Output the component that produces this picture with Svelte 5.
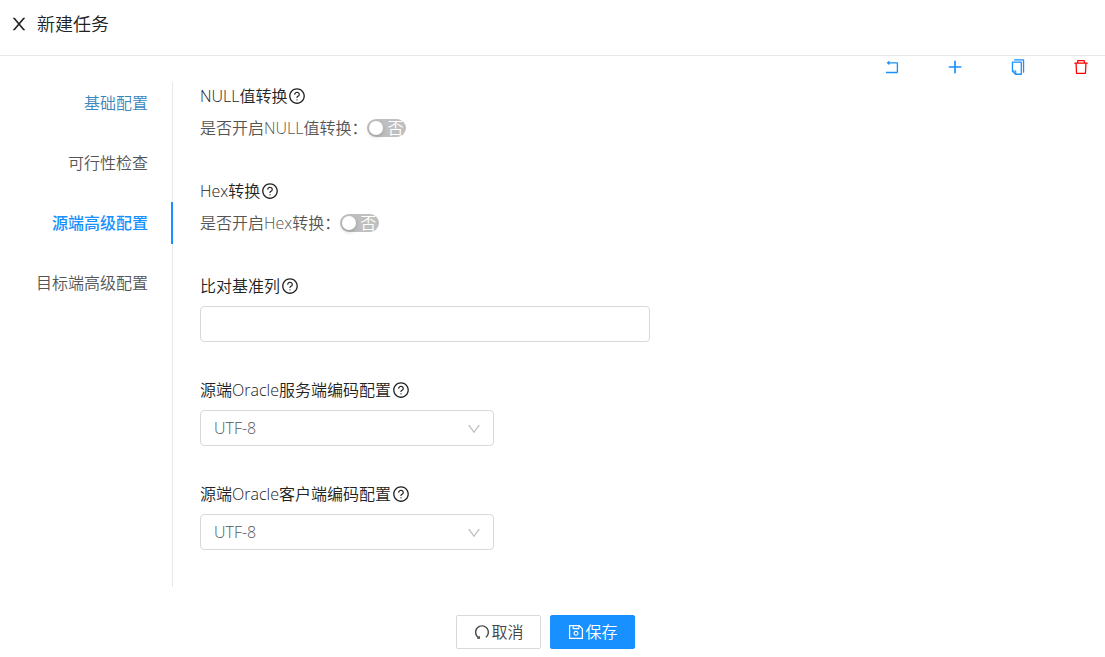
<script lang="ts">
	const icons = {
		close: 'M563.8 512l262.5-312.9c4.4-5.2.7-13.1-6.1-13.1h-79.8c-4.7 0-9.2 2.1-12.3 5.7L511.6 449.8 295.1 191.7c-3-3.6-7.5-5.7-12.3-5.7H203c-6.8 0-10.5 7.9-6.1 13.1L459.4 512 196.9 824.9A7.95 7.95 0 0 0 203 838h79.8c4.7 0 9.2-2.1 12.3-5.7l216.5-258.1 216.5 258.1c3 3.6 7.5 5.7 12.3 5.7h79.8c6.8 0 10.5-7.9 6.1-13.1L563.8 512z',
		rollback: 'M793 242H366v-74c0-6.7-7.7-10.4-12.9-6.3l-142 112a8 8 0 0 0 0 12.6l142 112c5.2 4.1 12.9.4 12.9-6.3v-74h415v470H175c-4.4 0-8 3.6-8 8v60c0 4.4 3.6 8 8 8h618c35.3 0 64-28.7 64-64V306c0-35.3-28.7-64-64-64z',
		plus: 'M464 152h96v312h312v96H560v312h-96V560H152v-96h312z',
		copy: 'M832 64H296c-4.4 0-8 3.6-8 8v56c0 4.4 3.6 8 8 8h496v688c0 4.4 3.6 8 8 8h56c4.4 0 8-3.6 8-8V96c0-17.7-14.3-32-32-32zM704 192H192c-17.7 0-32 14.3-32 32v530.7c0 8.5 3.4 16.6 9.4 22.6l173.3 173.3c2.2 2.2 4.7 4 7.4 5.5v1.9h4.2c3.5 1.3 7.2 2 11 2H704c17.7 0 32-14.3 32-32V224c0-17.7-14.3-32-32-32zM350 856.2L263.9 770H350v86.2zM664 888H414V746c0-22.1-17.9-40-40-40H232V264h432v624z',
		trash: 'M360 184h-8c4.4 0 8-3.6 8-8v8h304v-8c0 4.4 3.6 8 8 8h-8v72h72v-80c0-35.3-28.7-64-64-64H352c-35.3 0-64 28.7-64 64v80h72v-72zm504 72H160c-17.7 0-32 14.3-32 32v32c0 4.4 3.6 8 8 8h60.4l24.7 523c1.6 34.1 29.8 61 63.9 61h454c34.2 0 62.3-26.8 63.9-61l24.7-523H888c4.4 0 8-3.6 8-8v-32c0-17.7-14.3-32-32-32zM731.3 840H292.7l-24.2-512h487l-24.2 512z',
		help: 'M512 64C264.6 64 64 264.6 64 512s200.6 448 448 448 448-200.6 448-448S759.4 64 512 64zm0 820c-205.4 0-372-166.6-372-372s166.6-372 372-372 372 166.6 372 372-166.6 372-372 372zM623.6 316.7C593.6 290.4 554 276 512 276s-81.6 14.5-111.6 40.7C369.2 344 352 380.7 352 420v7.6c0 4.4 3.6 8 8 8h48c4.4 0 8-3.6 8-8V420c0-44.1 43.1-80 96-80s96 35.9 96 80c0 31.1-22 59.6-56.1 72.7-21.2 8.1-39.2 22.3-52.1 40.9-13.1 19-19.9 41.8-19.9 64.9V620c0 4.4 3.6 8 8 8h48c4.4 0 8-3.6 8-8v-22.7a48.3 48.3 0 0 1 30.9-44.8c59-22.7 97.1-74.7 97.1-132.5.1-39.3-17.1-76-48.3-103.3zM472 732a40 40 0 1 0 80 0 40 40 0 1 0-80 0z',
		down: 'M884 256h-75c-5.1 0-9.9 2.5-12.9 6.6L512 654.2 227.9 262.6c-3-4.1-7.8-6.6-12.9-6.6h-75c-6.5 0-10.3 7.4-6.5 12.7l352.6 486.1c12.8 17.6 39 17.6 51.7 0l352.6-486.1c3.9-5.3.1-12.7-6.4-12.7z',
		undo: 'M511.4 124C290.5 124.3 112 303 112 523.9c0 128 60.2 242 153.8 315.2l-37.5 48c-4.1 5.3-.3 13 6.3 12.9l167-.8c5.2 0 9-4.9 7.7-9.9L369.8 727a8 8 0 0 0-14.1-3L315 776.1c-10.2-8-20-16.7-29.3-26a318.64 318.64 0 0 1-68.6-101.7C200.4 609 192 567.1 192 523.9s8.4-85.1 25.1-124.5c16.1-38.1 39.2-72.3 68.6-101.7 29.4-29.4 63.6-52.5 101.7-68.6C426.9 212.4 468.8 204 512 204s85.1 8.4 124.5 25.1c38.1 16.1 72.3 39.2 101.7 68.6 29.4 29.4 52.5 63.6 68.6 101.7 16.7 39.4 25.1 81.3 25.1 124.5s-8.4 85.1-25.1 124.5a318.64 318.64 0 0 1-68.6 101.7c-7.5 7.5-15.3 14.5-23.4 21.2a7.93 7.93 0 0 0-1.2 11.1l39.4 50.5c2.8 3.5 7.9 4.1 11.4 1.3C854.5 760.8 912 649.1 912 523.9c0-221.1-179.4-400.2-400.6-399.9z',
		save: 'M893.3 293.3L730.7 130.7c-7.5-7.5-16.7-13-26.7-16V112H144c-17.7 0-32 14.3-32 32v736c0 17.7 14.3 32 32 32h736c17.7 0 32-14.3 32-32V338.5c0-17-6.7-33.2-18.7-45.2zM384 184h256v104H384V184zm456 656H184V184h136v136c0 17.7 14.3 32 32 32h320c17.7 0 32-14.3 32-32V205.8l136 136V840zM512 442c-79.5 0-144 64.5-144 144s64.5 144 144 144 144-64.5 144-144-64.5-144-144-144zm0 224c-44.2 0-80-35.8-80-80s35.8-80 80-80 80 35.8 80 80-35.8 80-80 80z'
	};

	const steps = ['基础配置', '可行性检查', '源端高级配置', '目标端高级配置'];
	let current = $state(2);

	let switches = $state([
		{ id: 'null-convert', title: 'NULL值转换', text: '是否开启NULL值转换', on: false },
		{ id: 'hex-convert', title: 'Hex转换', text: '是否开启Hex转换', on: false }
	]);
	let baseColumn = $state('');
	let encodings = $state([
		{ id: 'server-encoding', title: '源端Oracle服务端编码配置', value: 'UTF-8' },
		{ id: 'client-encoding', title: '源端Oracle客户端编码配置', value: 'UTF-8' }
	]);
</script>

{#snippet icon(path: string)}
	<svg class="icon" viewBox="0 0 1024 1024" aria-hidden="true"><path d={path} /></svg>
{/snippet}

<div class="page">
	<header>
		<button class="icon-btn close">{@render icon(icons.close)}</button>
		<h1>新建任务</h1>
	</header>

	<div class="toolbar">
		<button class="icon-btn">{@render icon(icons.rollback)}</button>
		<button class="icon-btn">{@render icon(icons.plus)}</button>
		<button class="icon-btn">{@render icon(icons.copy)}</button>
		<button class="icon-btn danger">{@render icon(icons.trash)}</button>
	</div>

	<div class="body">
		<nav>
			{#each steps as step, i}
				<button
					class="step"
					class:first={i === 0}
					class:active={i === current}
					onclick={() => (current = i)}>{step}</button
				>
			{/each}
		</nav>

		<form id="task-form">
			{#each switches as item}
				<div class="field switch-field">
					<div class="title">{item.title}{@render icon(icons.help)}</div>
					<div class="row">
						<label for={item.id}>{item.text}：</label>
						<span class="switch" class:on={item.on}>
							<input id={item.id} type="checkbox" role="switch" bind:checked={item.on} />
							<span class="state">{item.on ? '是' : '否'}</span>
						</span>
					</div>
				</div>
			{/each}

			<div class="field">
				<label class="title" for="base-column">比对基准列{@render icon(icons.help)}</label>
				<input id="base-column" class="control" type="text" bind:value={baseColumn} />
			</div>

			{#each encodings as item}
				<div class="field">
					<label class="title" for={item.id}>{item.title}{@render icon(icons.help)}</label>
					<div class="select">
						<select id={item.id} class="control" bind:value={item.value}>
							<option>UTF-8</option>
							<option>GBK</option>
						</select>
						{@render icon(icons.down)}
					</div>
				</div>
			{/each}
		</form>
	</div>

	<footer>
		<button class="btn">{@render icon(icons.undo)}取消</button>
		<button class="btn primary" form="task-form" type="button">{@render icon(icons.save)}保存</button>
	</footer>
</div>

<style>
	:global(body) {
		background: #fff;
	}

	.page {
		font-family: 'Open Sans', 'Noto Sans CJK SC', sans-serif;
		font-size: 16px;
		font-weight: 350;
		line-height: 24px;
		color: #222;
	}

	button,
	input,
	select {
		font: inherit;
		color: inherit;
		box-sizing: border-box;
		margin: 0;
	}

	button {
		cursor: pointer;
	}

	.icon {
		display: block;
		flex: none;
		width: 18px;
		height: 18px;
		fill: currentColor;
	}

	header {
		display: flex;
		align-items: center;
		gap: 8px;
		height: 47px;
		padding: 0 9px 8px;
		border-bottom: 1px solid #e8e8e8;
	}

	h1 {
		margin: 0;
		font-size: 18px;
		font-weight: 350;
	}

	.icon-btn {
		padding: 0;
		border: 0;
		background: none;
		color: #1890ff;
	}

	.close {
		color: #222;
	}

	.close .icon {
		width: 20px;
		height: 20px;
	}

	.danger {
		color: #f00;
	}

	.toolbar {
		display: flex;
		justify-content: flex-end;
		gap: 45px;
		padding: 2px 15px 6px;
	}

	.body {
		display: flex;
	}

	nav {
		display: flex;
		flex-direction: column;
		gap: 18px;
		box-sizing: border-box;
		width: 173px;
		border-right: 1px solid #e8e8e8;
	}

	.step {
		height: 42px;
		margin-right: -1px;
		padding: 0 23px 0 0;
		border: 0;
		border-right: 2px solid transparent;
		background: none;
		color: #555;
		text-align: right;
	}

	.step.first {
		color: #3d85bd;
	}

	.step.active {
		border-right-color: #1890ff;
		color: #1890ff;
		font-weight: 500;
	}

	form {
		display: flex;
		flex: 1;
		flex-direction: column;
		gap: 36px;
		padding: 2px 27px 37px;
	}

	.field {
		display: flex;
		flex-direction: column;
		gap: 8px;
	}

	.switch-field {
		padding-bottom: 3px;
	}

	.title {
		display: flex;
		align-items: center;
		gap: 1px;
	}

	.row {
		display: flex;
		align-items: center;
		color: #555;
	}

	.switch {
		position: relative;
		width: 39px;
		height: 18px;
		border-radius: 9px;
		background: #bfbfbf;
		color: #fff;
		line-height: 18px;
	}

	.switch input {
		position: absolute;
		inset: 0;
		width: 100%;
		height: 100%;
		appearance: none;
		cursor: pointer;
	}

	.switch input::before {
		content: '';
		position: absolute;
		top: 2px;
		left: 2px;
		width: 14px;
		height: 14px;
		border-radius: 50%;
		background: #fff;
		box-shadow: 0 2px 4px rgba(0, 35, 11, 0.2);
	}

	.switch input:checked::before {
		left: 23px;
	}

	.state {
		display: block;
		padding: 0 3px;
		text-align: right;
	}

	.switch.on {
		background: #1890ff;
	}

	.switch.on .state {
		text-align: left;
	}

	.control {
		width: 100%;
		max-width: 450px;
		height: 36px;
		padding: 0 13px;
		border: 1px solid #d9d9d9;
		border-radius: 4px;
		outline: 0;
		background: #fff;
		color: #555;
	}

	.control:focus {
		border-color: #1890ff;
	}

	.select {
		position: relative;
		max-width: 294px;
	}

	.select select {
		appearance: none;
	}

	.select .icon {
		position: absolute;
		top: 11px;
		right: 12px;
		width: 16px;
		height: 16px;
		color: #bfbfbf;
		pointer-events: none;
	}

	footer {
		display: flex;
		justify-content: center;
		gap: 9px;
		padding: 28px 14px 8px 0;
	}

	.btn {
		display: flex;
		align-items: center;
		justify-content: center;
		width: 85px;
		height: 34px;
		padding: 0;
		border: 1px solid #d9d9d9;
		border-radius: 2px;
		background: #fff;
		color: #444;
	}

	.btn.primary {
		border-color: #1890ff;
		background: #1890ff;
		color: #fff;
	}
</style>
